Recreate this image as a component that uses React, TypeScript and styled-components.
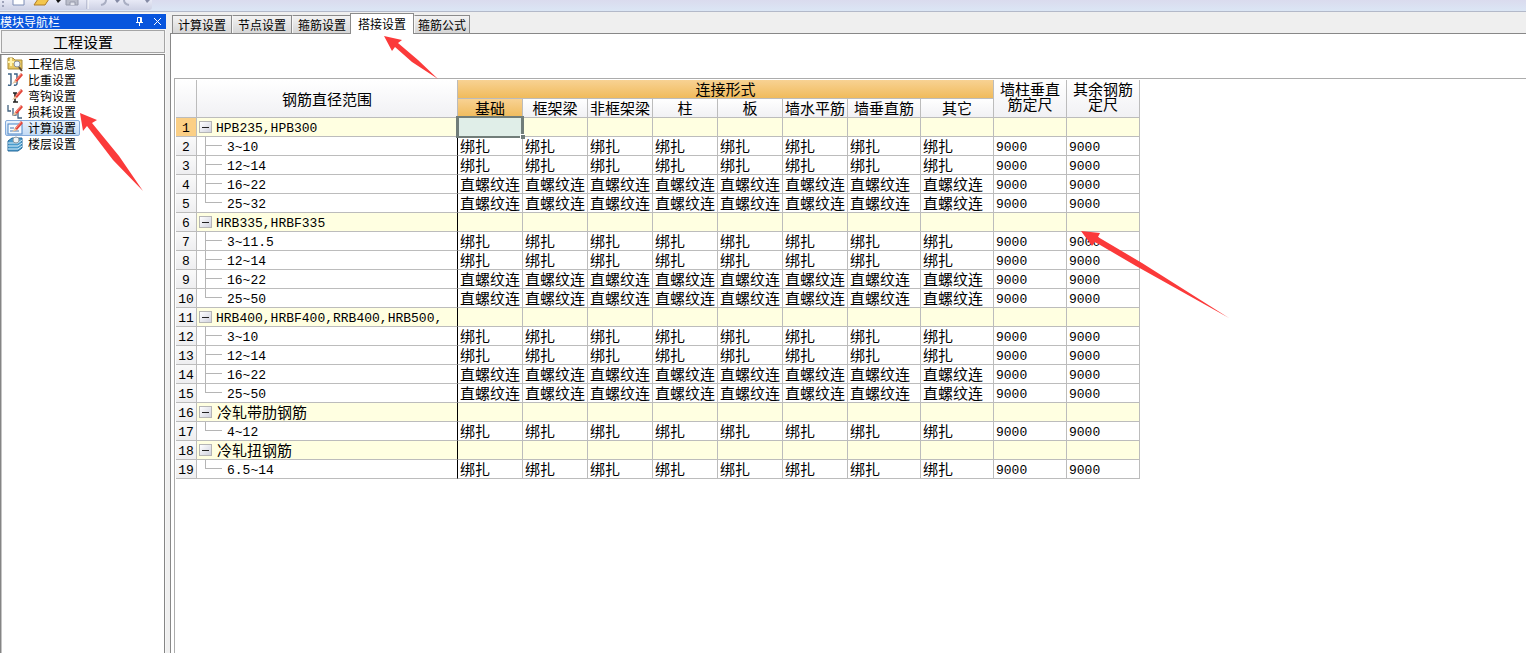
import React, { useState } from "react";
import styled, { createGlobalStyle, css } from "styled-components";

const GlobalStyle = createGlobalStyle`
  html, body, #root { height: 100%; }
  body {
    margin: 0;
    background: #efefef;
    color: #000;
    font-family: "Noto Sans CJK SC", sans-serif;
    font-size: 12px;
    overflow: hidden;
  }
  button { font: inherit; color: inherit; cursor: default; }
  svg { display: block; flex: none; }
`;

const mono = css`
  font-family: "Liberation Mono", "Noto Sans CJK SC", monospace;
  font-size: 13px;
  line-height: 14px;
  padding-top: 4px;
`;

const Page = styled.div`
  position: relative;
  display: flex;
  flex-direction: column;
  height: 100%;
`;

const Toolbar = styled.header`
  height: 12px;
  flex: none;
  box-sizing: border-box;
  overflow: hidden;
  border-bottom: 1px solid #b3b9c9;
  background: linear-gradient(#dadbee, #dbe6f5);
`;

const ToolStrip = styled.div`
  width: 152px;
  height: 10px;
  border-bottom-right-radius: 3px;
  background: linear-gradient(#e8eaf6, #cdd1e4);
`;

const Workspace = styled.div`
  flex: 1;
  min-height: 0;
  display: flex;
  padding-top: 1px;
`;

const Sidebar = styled.aside`
  width: 166px;
  flex: none;
  margin-right: 4px;
  display: flex;
  flex-direction: column;
  background: #f6f6f6;
  padding-top: 1px;
`;

const PaneTitle = styled.div`
  height: 15px;
  display: flex;
  align-items: center;
  background: #0855dd;
  color: #fff;
  line-height: 15px;
`;

const PaneName = styled.span`
  flex: 1;
`;

const PaneButton = styled.button`
  width: 18px;
  height: 15px;
  padding: 0;
  border: 0;
  background: none;
  display: flex;
  align-items: center;
  justify-content: center;
`;

const SectionButton = styled.button`
  margin: 1px 1px 0;
  height: 23px;
  padding: 0;
  border: 1px solid #a5a5a5;
  background: #f0f0f0;
  font-size: 15px;
  line-height: 20px;
  text-align: center;
`;

const NavList = styled.nav`
  flex: 1;
  display: flex;
  flex-direction: column;
  align-items: flex-start;
  margin: 1px 1px 0 0;
  padding: 1px 2px;
  border: 1px solid #858585;
  border-bottom: 0;
  box-shadow: inset 1px 0 #c4c4c4;
  background: #fff;
`;

const NavItem = styled.a<{ $selected?: boolean }>`
  display: flex;
  align-items: center;
  gap: 5px;
  height: 16px;
  box-sizing: border-box;
  margin-left: 2px;
  padding: 0 3px 0 1px;
  border: 1px solid transparent;
  border-radius: 2px;
  line-height: 14px;
  color: #000;
  text-decoration: none;
  ${(p) => p.$selected && css`
    border-color: #84abdc;
    background: linear-gradient(#e9f2fc, #c3dbf5);
  `}
`;

const Main = styled.main`
  flex: 1;
  min-width: 0;
  display: flex;
  flex-direction: column;
`;

const TabBar = styled.div`
  display: flex;
  align-items: flex-end;
  height: 20px;
  padding-left: 2px;
`;

const Tab = styled.button<{ $active: boolean }>`
  height: 18px;
  box-sizing: border-box;
  padding: 0 5px;
  border: 1px solid #8b8b8b;
  border-left-color: #f8f8f8;
  border-bottom: 0;
  background: linear-gradient(#f3f3f3, #d6d6d6);
  line-height: 17px;
  white-space: nowrap;
  &:first-child { border-left-color: #8b8b8b; }
  &:last-child { padding: 0 3px; }
  ${(p) => p.$active && css`
    position: relative;
    height: 21px;
    margin: 0 0 -1px -2px;
    padding: 0 7px;
    border-left-color: #8b8b8b;
    background: #fff;
    line-height: 18px;
  `}
`;

const TabPage = styled.section`
  flex: 1;
  min-height: 0;
  border: 1px solid #888;
  border-right: 0;
  border-bottom: 0;
  background: #fff;
  padding: 44px 0 0 3px;
  display: flex;
`;

const GridFrame = styled.div`
  flex: 1;
  min-width: 0;
  overflow: hidden;
  border: 1px solid #acacac;
  border-right: 0;
  border-bottom: 0;
  padding: 1px 0 0 1px;
`;

const Grid = styled.table`
  table-layout: fixed;
  width: 964px;
  border-collapse: separate;
  border-spacing: 0;
`;

const headBase = css`
  box-sizing: border-box;
  height: 19px;
  padding: 0;
  border-right: 1px solid #bcbcbc;
  border-bottom: 1px solid #bcbcbc;
  font-weight: 400;
  font-size: 15px;
  line-height: 18px;
  white-space: nowrap;
  text-align: center;
`;

const HeadCell = styled.th<{ $hot?: boolean }>`
  ${headBase}
  background: ${(p) => (p.$hot ? "linear-gradient(#f8d293, #f0bb5c)" : "linear-gradient(#fff, #f1f1f4)")};
`;

const TallHeadCell = styled(HeadCell)`
  font-family: "Liberation Mono", "Noto Sans CJK SC", monospace;
  line-height: 15px;
`;

const RowHead = styled.th<{ $hot?: boolean }>`
  ${headBase}
  ${mono}
  background: ${(p) => (p.$hot ? "#fbcf85" : "linear-gradient(#fafafa, #eeeef0)")};
`;

const Cell = styled.td<{ $group?: boolean }>`
  box-sizing: border-box;
  height: 19px;
  padding: 0 0 0 2px;
  border-right: 1px solid #bcbcbc;
  border-bottom: 1px solid #bcbcbc;
  background: ${(p) => (p.$group ? "#ffffe1" : "#fff")};
  font-size: 15px;
  line-height: 18px;
  white-space: nowrap;
`;

const NumberCell = styled(Cell)`
  ${mono}
`;

const CursorCell = styled(Cell)`
  position: relative;
  background: #e0eee8;
  &::before {
    content: "";
    position: absolute;
    inset: -2px;
    border: 3px solid #717d79;
    border-top-width: 2px;
    border-bottom-width: 2px;
  }
  &::after {
    content: "";
    position: absolute;
    right: -3px;
    bottom: -3px;
    width: 4px;
    height: 4px;
    border: 1px solid #fff;
    border-right: 0;
    border-bottom: 0;
    background: #717d79;
  }
`;

const TreeCell = styled(Cell)`
  padding: 0;
  border-right-color: #000;
`;

const TreeLine = styled.div`
  display: flex;
  align-items: center;
  height: 18px;
`;

const TreeText = styled.span<{ $cjk?: boolean }>`
  ${(p) => (p.$cjk ? css`padding-left: 1px;` : mono)}
`;

const Toggle = styled.button`
  width: 13px;
  height: 12px;
  flex: none;
  box-sizing: border-box;
  margin: 0 4px 0 2px;
  padding: 0;
  border: 1px solid #b5b5b5;
  background: linear-gradient(135deg, #fff, #d0d2de);
  display: flex;
  align-items: center;
  justify-content: center;
  &::before {
    content: "";
    width: 7px;
    height: 1px;
    background: #222;
  }
`;

const Branch = styled.span<{ $last: boolean }>`
  width: 17px;
  flex: none;
  margin: 0 5px 0 8px;
  display: flex;
  flex-direction: column;
  &::before, &::after {
    content: "";
    box-sizing: border-box;
    height: 9px;
    border-left: 1px solid #b5b5b5;
  }
  &::before { border-bottom: 1px solid #b5b5b5; }
  &::after { border-left-color: ${(p) => (p.$last ? "transparent" : "#b5b5b5")}; }
`;

const Annotations = styled.svg`
  position: absolute;
  left: 0;
  top: 0;
  pointer-events: none;
`;

type Group = { name: string; cjk?: boolean; items: [string, string][] };

const TIE = "绑扎";
const SCREW = "直螺纹连";

const groups: Group[] = [
  { name: "HPB235,HPB300", items: [["3~10", TIE], ["12~14", TIE], ["16~22", SCREW], ["25~32", SCREW]] },
  { name: "HRB335,HRBF335", items: [["3~11.5", TIE], ["12~14", TIE], ["16~22", SCREW], ["25~50", SCREW]] },
  { name: "HRB400,HRBF400,RRB400,HRB500,", items: [["3~10", TIE], ["12~14", TIE], ["16~22", SCREW], ["25~50", SCREW]] },
  { name: "冷轧带肋钢筋", cjk: true, items: [["4~12", TIE]] },
  { name: "冷轧扭钢筋", cjk: true, items: [["6.5~14", TIE]] },
];

const joints = ["基础", "框架梁", "非框架梁", "柱", "板", "墙水平筋", "墙垂直筋", "其它"];
const tabs = ["计算设置", "节点设置", "箍筋设置", "搭接设置", "箍筋公式"];
const widths = [21, 261, 65, 65, 65, 65, 65, 65, 73, 73, 73, 73];

const Pencil = () => (
  <>
    <path d="M7 11 L8 8 L14 1 L16 3 L10 10 Z" fill="#e2463b" />
    <path d="M9 8 L14 2" stroke="#ff9a88" strokeWidth="1" />
    <path d="M5 12 L8 8 L10 10 Z" fill="#e9c9a0" />
  </>
);

const icons: Record<string, React.ReactNode> = {
  info: (
    <>
      <path d="M1 2 H6 L8 4 H15 V13 H1 Z" fill="#e9c860" stroke="#a88b38" />
      <path d="M1 6 H7 M4 2 V10" stroke="#fff3ae" strokeWidth="2" />
      <circle cx="10" cy="8" r="3" fill="#eef6fb" stroke="#8b8f96" />
      <path d="M12 11 L15 15" stroke="#594b38" strokeWidth="2" />
    </>
  ),
  weight: (
    <>
      <path d="M1 2 H4 V12 Q4 14 1 13 M7 2 H10 V12 Q9 14 7 13" fill="none" stroke="#3b6285" strokeWidth="1.4" />
      <Pencil />
    </>
  ),
  hook: (
    <>
      <path d="M6 5 H10 M8 5 V14 M6 14 H11" fill="none" stroke="#222" strokeWidth="1.6" />
      <Pencil />
    </>
  ),
  loss: (
    <>
      <path d="M1 1 V7 H4 M6 4 V11 H9 V8 M11 8 V14 H15" fill="none" stroke="#41617f" strokeWidth="1.3" />
      <Pencil />
    </>
  ),
  calc: (
    <>
      <rect x="1" y="4" width="14" height="10" fill="#f5faff" stroke="#4d85c6" />
      <path d="M3 8 H7 M3 11 H12" stroke="#4977ad" />
      <Pencil />
    </>
  ),
  floor: (
    <>
      <path d="M1 5 L5 2 H15 V12 L11 15 H1 Z" fill="#4a9bcc" stroke="#286b9c" />
      <path d="M1 7 H11 L15 4 M1 10 H11 L15 7 M1 13 H11 L15 10" fill="none" stroke="#d9f0fb" />
      <circle cx="9" cy="4" r="3" fill="#eef4f7" stroke="#8d9aa3" />
    </>
  ),
};

const navItems: [string, string][] = [
  ["info", "工程信息"],
  ["weight", "比重设置"],
  ["hook", "弯钩设置"],
  ["loss", "损耗设置"],
  ["calc", "计算设置"],
  ["floor", "楼层设置"],
];

export default function App() {
  const [activeTab, setActiveTab] = useState(3);
  const [closed, setClosed] = useState<number[]>([]);
  const toggle = (i: number) =>
    setClosed((c) => (c.includes(i) ? c.filter((n) => n !== i) : [...c, i]));

  let rowNumber = 0;

  return (
    <Page>
      <GlobalStyle />
      <Toolbar>
        <ToolStrip>
          <svg width="152" height="10" aria-hidden="true">
            <path d="M3 1 V3 M3 5 V7" stroke="#9ea3ba" strokeWidth="2" />
            <path d="M13 0 V5 H24 V0" fill="#fff" stroke="#7d8db5" />
            <path d="M34 5 L38 -1 H49 L45 5 Z" fill="#f3c64d" stroke="#ad7a26" />
            <path d="M56 0 H61 L58 3 Z" fill="#111" />
            <path d="M66 0 V5 H78 V0" fill="#b9bcc9" stroke="#969aab" />
            <path d="M70 5 V2 H75 V5" fill="#e1e3ec" stroke="#969aab" />
            <path d="M87 0 V9" stroke="#9ca2bc" />
            <path d="M88 0 V9" stroke="#fff" />
            <path d="M101 5 Q106 4 106 0 M129 5 Q124 4 124 0" fill="none" stroke="#a9aec2" strokeWidth="2" />
            <path d="M115 0 H120 L117 3 Z M145 0 H150 L147 3 Z" fill="#858ba5" />
          </svg>
        </ToolStrip>
      </Toolbar>

      <Workspace>
        <Sidebar>
          <PaneTitle>
            <PaneName>模块导航栏</PaneName>
            <PaneButton aria-label="固定">
              <svg width="9" height="9" viewBox="0 0 9 9" fill="none" stroke="#fff">
                <path d="M2.500 5 V.5 H6.500 V5 M5.500 1 V5 M1 5.500 H8 M4.500 6 V9" />
              </svg>
            </PaneButton>
            <PaneButton aria-label="关闭">
              <svg width="9" height="9" viewBox="0 0 9 9" stroke="#fff">
                <path d="M1 1 L8 8 M8 1 L1 8" />
              </svg>
            </PaneButton>
          </PaneTitle>
          <SectionButton>工程设置</SectionButton>
          <NavList>
            {navItems.map(([icon, label]) => (
              <NavItem key={icon} href={"#" + icon} $selected={icon === "calc"}>
                <svg width="16" height="16" viewBox="0 0 16 16" aria-hidden="true">{icons[icon]}</svg>
                {label}
              </NavItem>
            ))}
          </NavList>
        </Sidebar>

        <Main>
          <TabBar role="tablist">
            {tabs.map((t, i) => (
              <Tab key={t} role="tab" aria-selected={i === activeTab} $active={i === activeTab} onClick={() => setActiveTab(i)}>
                {t}
              </Tab>
            ))}
          </TabBar>
          <TabPage>
            <GridFrame>
              <Grid>
                <colgroup>
                  {widths.map((w, i) => <col key={i} width={w} />)}
                </colgroup>
                <thead>
                  <tr>
                    <HeadCell rowSpan={2} aria-label="行号" />
                    <HeadCell rowSpan={2}>钢筋直径范围</HeadCell>
                    <HeadCell colSpan={8} $hot>连接形式</HeadCell>
                    <TallHeadCell rowSpan={2}>墙柱垂直<br />筋定尺</TallHeadCell>
                    <TallHeadCell rowSpan={2}>其余钢筋<br />定尺</TallHeadCell>
                  </tr>
                  <tr>
                    {joints.map((j, i) => <HeadCell key={j} $hot={i === 0}>{j}</HeadCell>)}
                  </tr>
                </thead>
                <tbody>
                  {groups.map((g, gi) => {
                    const first = ++rowNumber;
                    const open = !closed.includes(gi);
                    rowNumber += g.items.length;
                    return (
                      <React.Fragment key={g.name}>
                        <tr>
                          <RowHead $hot={first === 1}>{first}</RowHead>
                          <TreeCell $group>
                            <TreeLine>
                              <Toggle aria-label={g.name} aria-expanded={open} onClick={() => toggle(gi)} />
                              <TreeText $cjk={g.cjk}>{g.name}</TreeText>
                            </TreeLine>
                          </TreeCell>
                          {widths.slice(2).map((_, c) =>
                            gi === 0 && c === 0 ? <CursorCell key={c} /> : <Cell key={c} $group />
                          )}
                        </tr>
                        {open && g.items.map(([range, joint], ri) => (
                          <tr key={range}>
                            <RowHead>{first + ri + 1}</RowHead>
                            <TreeCell>
                              <TreeLine>
                                <Branch $last={ri === g.items.length - 1} />
                                <TreeText>{range}</TreeText>
                              </TreeLine>
                            </TreeCell>
                            {joints.map((j) => <Cell key={j}>{joint}</Cell>)}
                            <NumberCell>9000</NumberCell>
                            <NumberCell>9000</NumberCell>
                          </tr>
                        ))}
                      </React.Fragment>
                    );
                  })}
                </tbody>
              </Grid>
            </GridFrame>
          </TabPage>
        </Main>
      </Workspace>

      <Annotations width="1240" height="330" fill="#fb3a3a" aria-hidden="true">
        <path d="M80 113 L97 120 L92 123 L119 156 L143 191 L113 160 L87 126 L83 131 Z" />
        <path d="M384 36 L402 40 L398 43 L418 60 L438 79 L412 62 L395 47 L392 51 Z" />
        <path d="M1081 231 L1100 233 L1098 237 L1142 263 L1229 318 L1136 266 L1095 242 L1092 246 Z" />
      </Annotations>
    </Page>
  );
}
